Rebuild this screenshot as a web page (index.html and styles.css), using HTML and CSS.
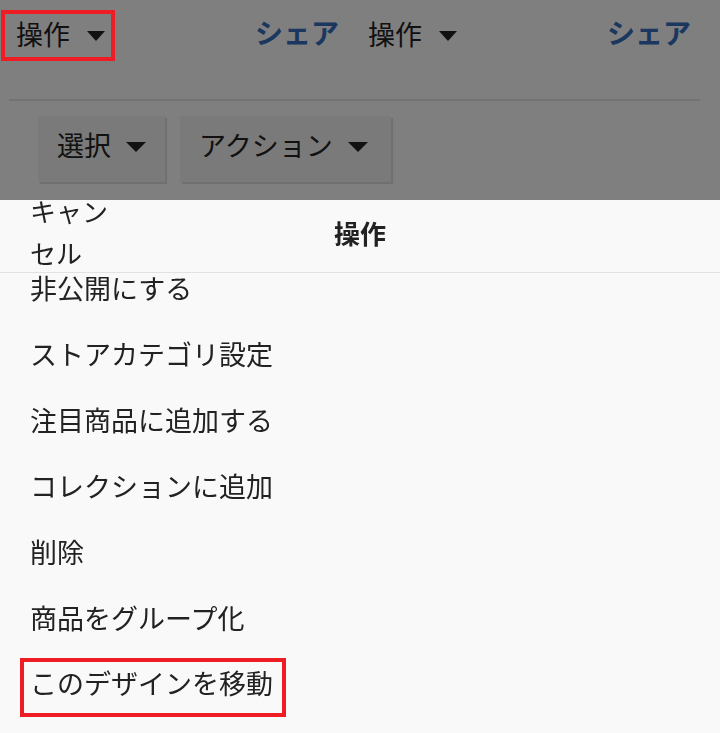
FILE: index.html
```html
<!DOCTYPE html>
<html lang="ja">
<head>
<meta charset="utf-8">
<title>操作</title>
<link rel="stylesheet" href="styles.css">
</head>
<body>
<div class="page">
  <div class="topbar">
    <div class="group">
      <div class="dd marked"><span>操作</span><i class="tri"></i></div>
      <div class="share">シェア</div>
    </div>
    <div class="group">
      <div class="dd"><span>操作</span><i class="tri"></i></div>
      <div class="share">シェア</div>
    </div>
  </div>
  <div class="divider"></div>
  <div class="btnrow">
    <div class="btn"><span>選択</span><i class="tri"></i></div>
    <div class="btn btn-wide"><span>アクション</span><i class="tri"></i></div>
  </div>
</div>
<div class="backdrop"></div>
<div class="sheet">
  <div class="sheet-head">
    <div class="cancel">キャンセル</div>
    <div class="title">操作</div>
    <div></div>
  </div>
  <ul class="list">
    <li>非公開にする</li>
    <li>ストアカテゴリ設定</li>
    <li>注目商品に追加する</li>
    <li>コレクションに追加</li>
    <li>削除</li>
    <li>商品をグループ化</li>
    <li><span class="mark">このデザインを移動</span></li>
  </ul>
</div>
</body>
</html>
```

FILE: styles.css
```css
* { box-sizing: border-box; }
html, body { margin: 0; padding: 0; }
body {
  width: 720px;
  height: 733px;
  overflow: hidden;
  background: #ffffff;
  font-family: "Noto Sans CJK JP", "Noto Sans", sans-serif;
  color: #222222;
}
.page { width: 720px; }
.topbar {
  display: flex;
  height: 99px;
  padding: 10px 0 0 1px;
}
.group {
  width: 352px;
  height: 51px;
  display: flex;
  align-items: center;
  justify-content: space-between;
}
.dd {
  position: relative;
  height: 51px;
  display: flex;
  align-items: center;
  border: 4px solid transparent;
  padding: 0 6px 0 11px;
  font-size: 27px;
  gap: 17px;
}
.dd span { margin-bottom: 4px; }
.dd.marked::after {
  content: "";
  position: absolute;
  inset: -4px;
  border: 4px solid #ee1c25;
  z-index: 3;
}
.tri {
  display: block;
  width: 0;
  height: 0;
  border-left: 9.5px solid transparent;
  border-right: 9.5px solid transparent;
  border-top: 10px solid #222222;
}
.share {
  font-size: 28px;
  font-weight: 700;
  color: #366ec0;
  padding-right: 14px;
  margin-bottom: 8px;
}
.divider {
  height: 2px;
  margin: 0 20px 0 9px;
  background: #e6e6e6;
}
.btnrow {
  display: flex;
  gap: 15px;
  margin: 15px 0 0 38px;
}
.btn {
  height: 66px;
  display: flex;
  align-items: center;
  gap: 15px;
  padding: 0 19px 4px;
  font-size: 27px;
  background: #f4f4f4;
  box-shadow: 2px 2px 1px rgba(0, 0, 0, 0.12);
}
.btn span { margin-bottom: 6px; }
.btn-wide { padding-right: 23px; }
.btn .tri {
  border-left-width: 10px;
  border-right-width: 10px;
}
.backdrop {
  position: fixed;
  inset: 0;
  background: rgba(0, 0, 0, 0.5);
  z-index: 1;
}
.sheet {
  position: fixed;
  top: 200px;
  left: 0;
  right: 0;
  bottom: 0;
  background: #f9f9f9;
  z-index: 2;
}
.sheet-head {
  display: grid;
  grid-template-columns: 1fr auto 1fr;
  align-items: center;
  height: 73px;
  border-bottom: 1px solid #e2e2e2;
}
.cancel {
  justify-self: start;
  width: 110px;
  padding-left: 30px;
  font-size: 26px;
  line-height: 42px;
  margin-top: -10px;
}
.title {
  font-size: 26px;
  font-weight: 700;
  margin-bottom: 10px;
}
.list {
  list-style: none;
  margin: -17px 0 0 0;
  padding: 0;
}
.list li {
  height: 66px;
  display: flex;
  align-items: center;
  padding-left: 30px;
  padding-bottom: 4px;
  font-size: 27px;
}
.list li:last-child { padding-bottom: 0; }
.mark {
  display: block;
  border: 4px solid #ee1c25;
  padding: 0 9px 9px 6px;
  line-height: 42px;
  margin: 5px 0 0 -10px;
}
```
